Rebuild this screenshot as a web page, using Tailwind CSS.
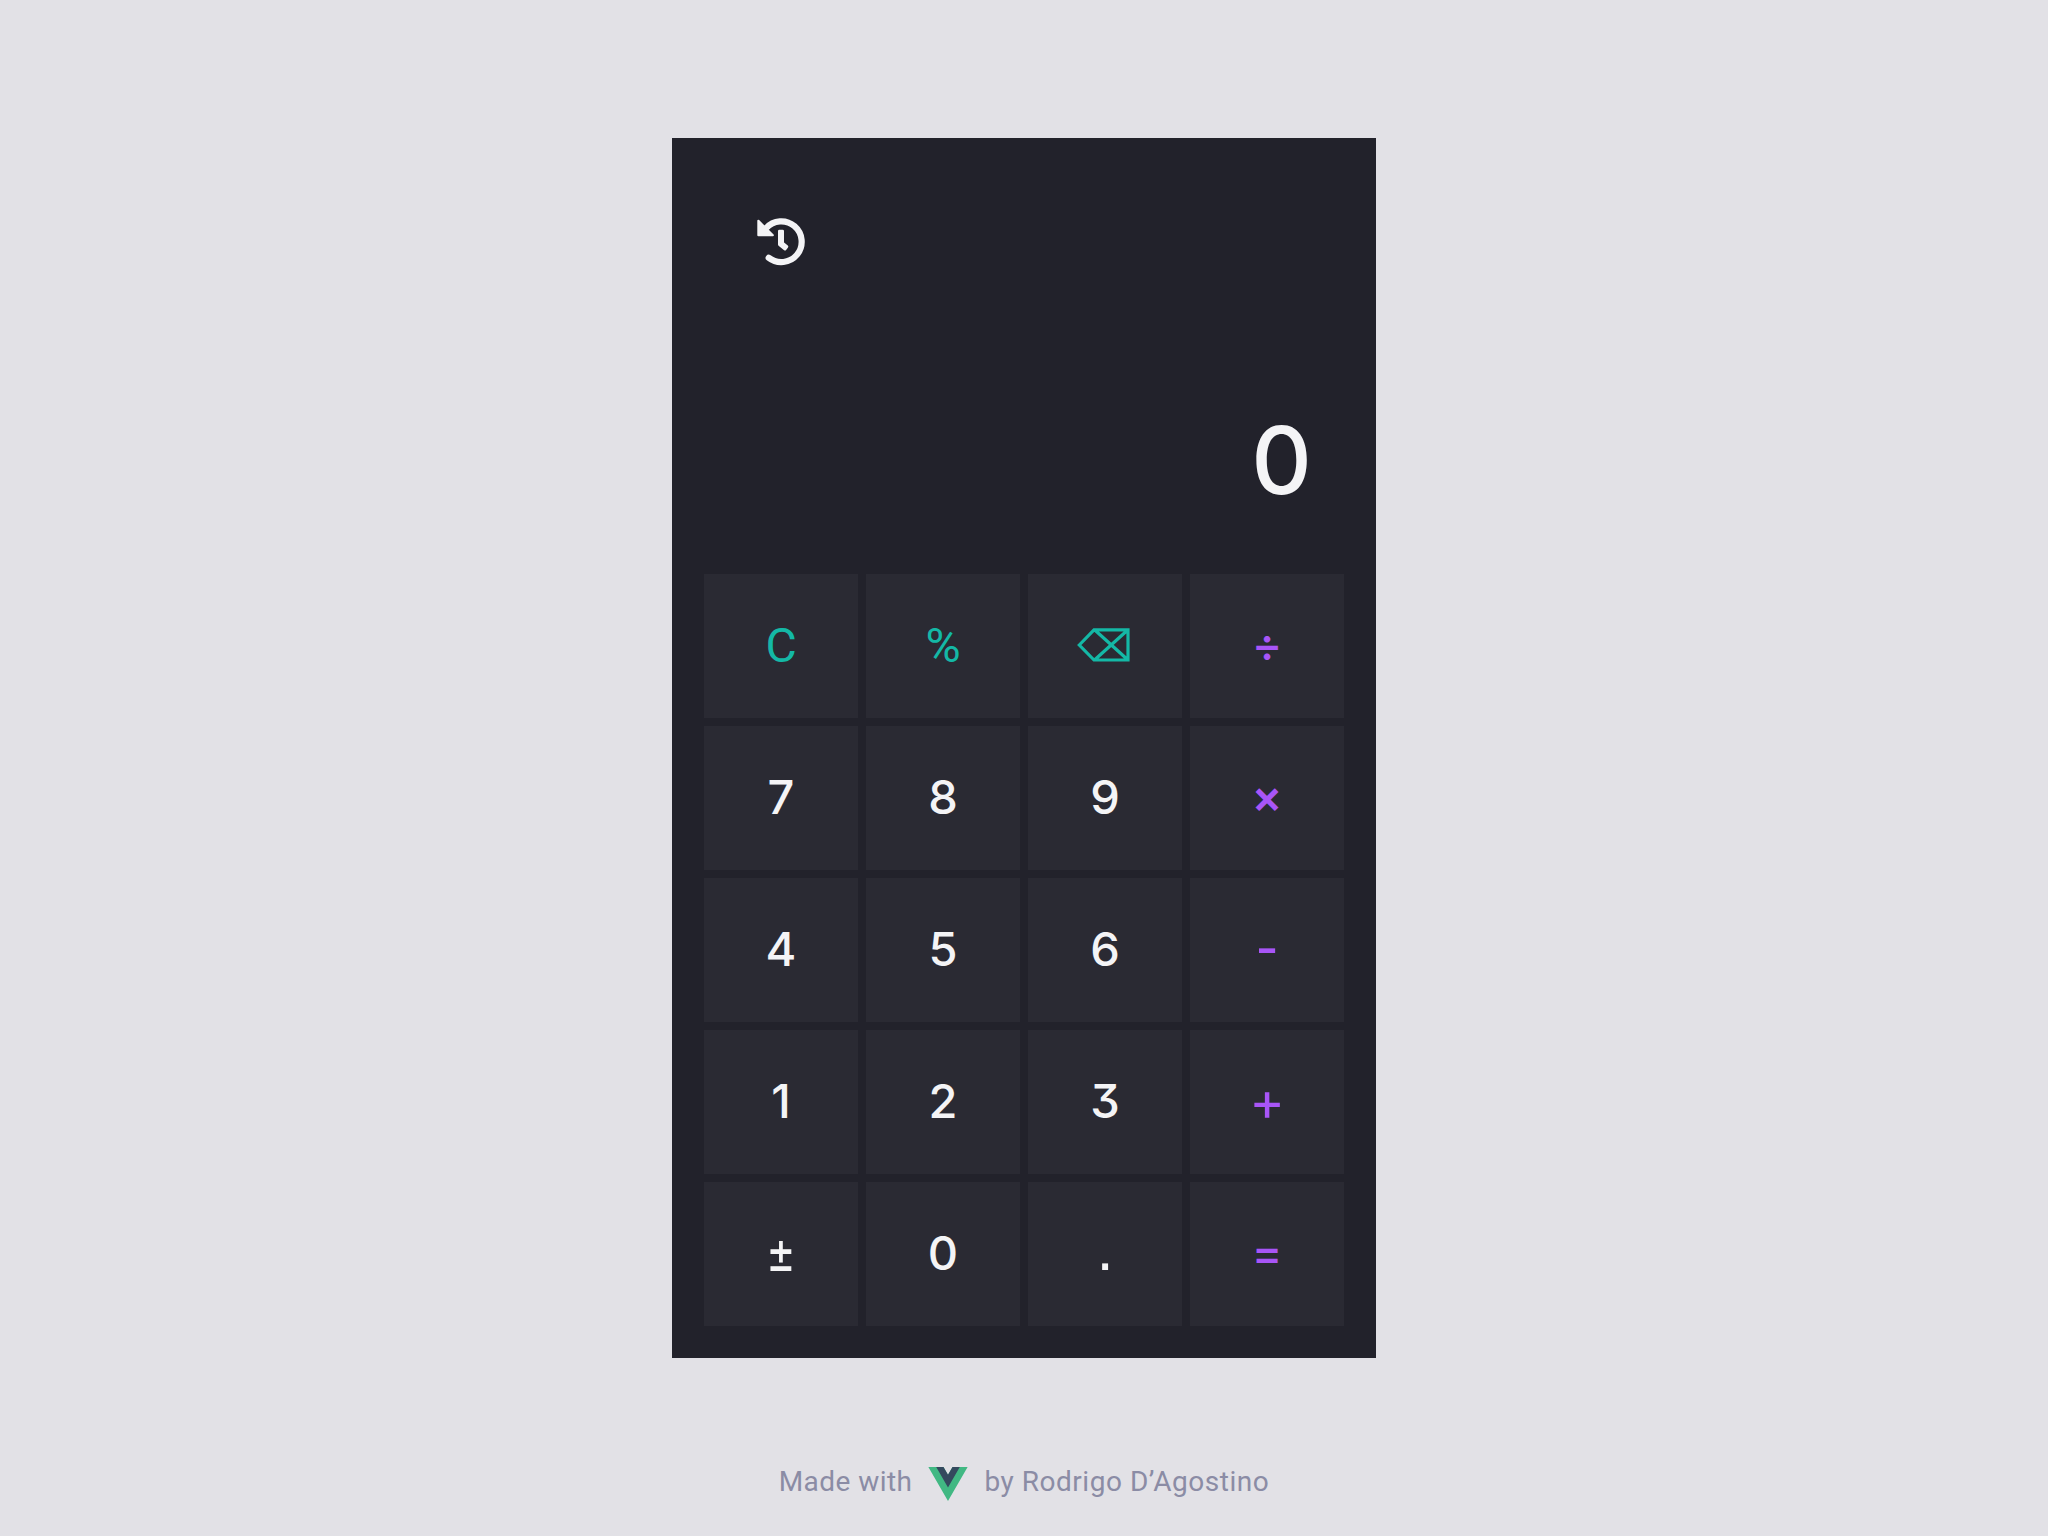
<!DOCTYPE html>
<html lang="en">
<head>
<meta charset="utf-8">
<title>Calculator</title>
<script src="https://cdn.jsdelivr.net/npm/@tailwindcss/browser@4"></script>
</head>
<body class="flex h-[1536px] flex-col items-center bg-[#e2e1e6] pt-[138px] font-['Inter',sans-serif]">
<main class="flex h-[1220px] w-[704px] flex-col bg-[#22222b] p-8 text-[#f4f4f6]">
  <div class="flex h-[404px] flex-col pt-12 pr-[32px] pl-[53px]">
    <button class="size-12" aria-label="History">
      <svg class="size-12" viewBox="0 0 48 48" fill="none" stroke="currentColor" stroke-width="6.2" stroke-linecap="round" stroke-linejoin="round">
        <path d="M9 10.2A20.4 20.4 0 1 1 11.7 39.8"/>
        <path d="M22.4 13.1H25.6V25L29.9 28.6L28 31.1L22.4 26.6Z" fill="currentColor" stroke-width="2.8"/>
        <path d="M1.4 2.9V17.2H15.8Z" fill="currentColor" stroke-width="2.2"/>
      </svg>
    </button>
    <div class="mt-[136px] text-right text-[94px] leading-[116px] font-[480]">0</div>
  </div>
  <div class="grid grid-cols-4 grid-rows-5 gap-2 text-[47px] leading-none font-[450] *:flex *:h-36 *:items-center *:justify-center *:bg-[#2a2a33]">
    <button class="font-['Roboto',sans-serif] text-[48px] font-normal text-[#14b8a6]">C</button>
    <button class="font-['Roboto',sans-serif] text-[48px] font-normal text-[#14b8a6]">%</button>
    <button class="pr-[3px] pb-0.5 text-[#14b8a6]" aria-label="Backspace">
      <svg class="h-[34px] w-[53px]" viewBox="0 0 53 34" fill="none" stroke="currentColor" stroke-width="3.2"><path d="M2.3 17L17 1.8H51V32H17ZM17.5 1.8L51 32M17.5 32L51 1.8"/></svg>
    </button>
    <button class="pb-1 text-[46px] text-[#a855f7]">÷</button>
    <button class="pb-1">7</button><button class="pb-1">8</button><button class="pb-1">9</button><button class="pb-1 text-[46px] font-semibold text-[#a855f7]">×</button>
    <button class="pb-1">4</button><button class="pb-1">5</button><button class="pb-1">6</button><button class="pb-1 text-[50px] text-[#a855f7]">-</button>
    <button class="pb-1">1</button><button class="pb-1">2</button><button class="pb-1 [font-feature-settings:'cv09']">3</button><button class="pb-0.5 text-[54px] font-normal text-[#a855f7]">+</button>
    <button class="pb-1.5 text-[45px] font-normal"><span class="scale-y-130">±</span></button><button class="pb-1">0</button><button class="pb-[11px] font-['Liberation_Sans',sans-serif] text-[62px] font-normal">.</button><button class="pb-1 text-[46px] text-[#a855f7]">=</button>
  </div>
</main>
<footer class="mt-[106px] flex h-9 items-center text-[28px] leading-9 text-[#8b8ca5]">
  <span class="font-['Roboto',sans-serif] tracking-[0.45px]">Made with</span>
  <svg class="mx-4 mt-1 h-[34px] w-10" viewBox="0 0 261.76 226.69"><path fill="#41b883" d="M161.096 0L130.871 52.352 100.647 0H0L130.872 226.688 261.749 0z"/><path fill="#34495e" d="M161.096 0L130.871 52.352 100.647 0H52.346L130.872 136.01 209.398 0z"/></svg>
  <span class="font-['Roboto',sans-serif] tracking-[0.53px]">by Rodrigo D’Agostino</span>
</footer>
</body>
</html>
